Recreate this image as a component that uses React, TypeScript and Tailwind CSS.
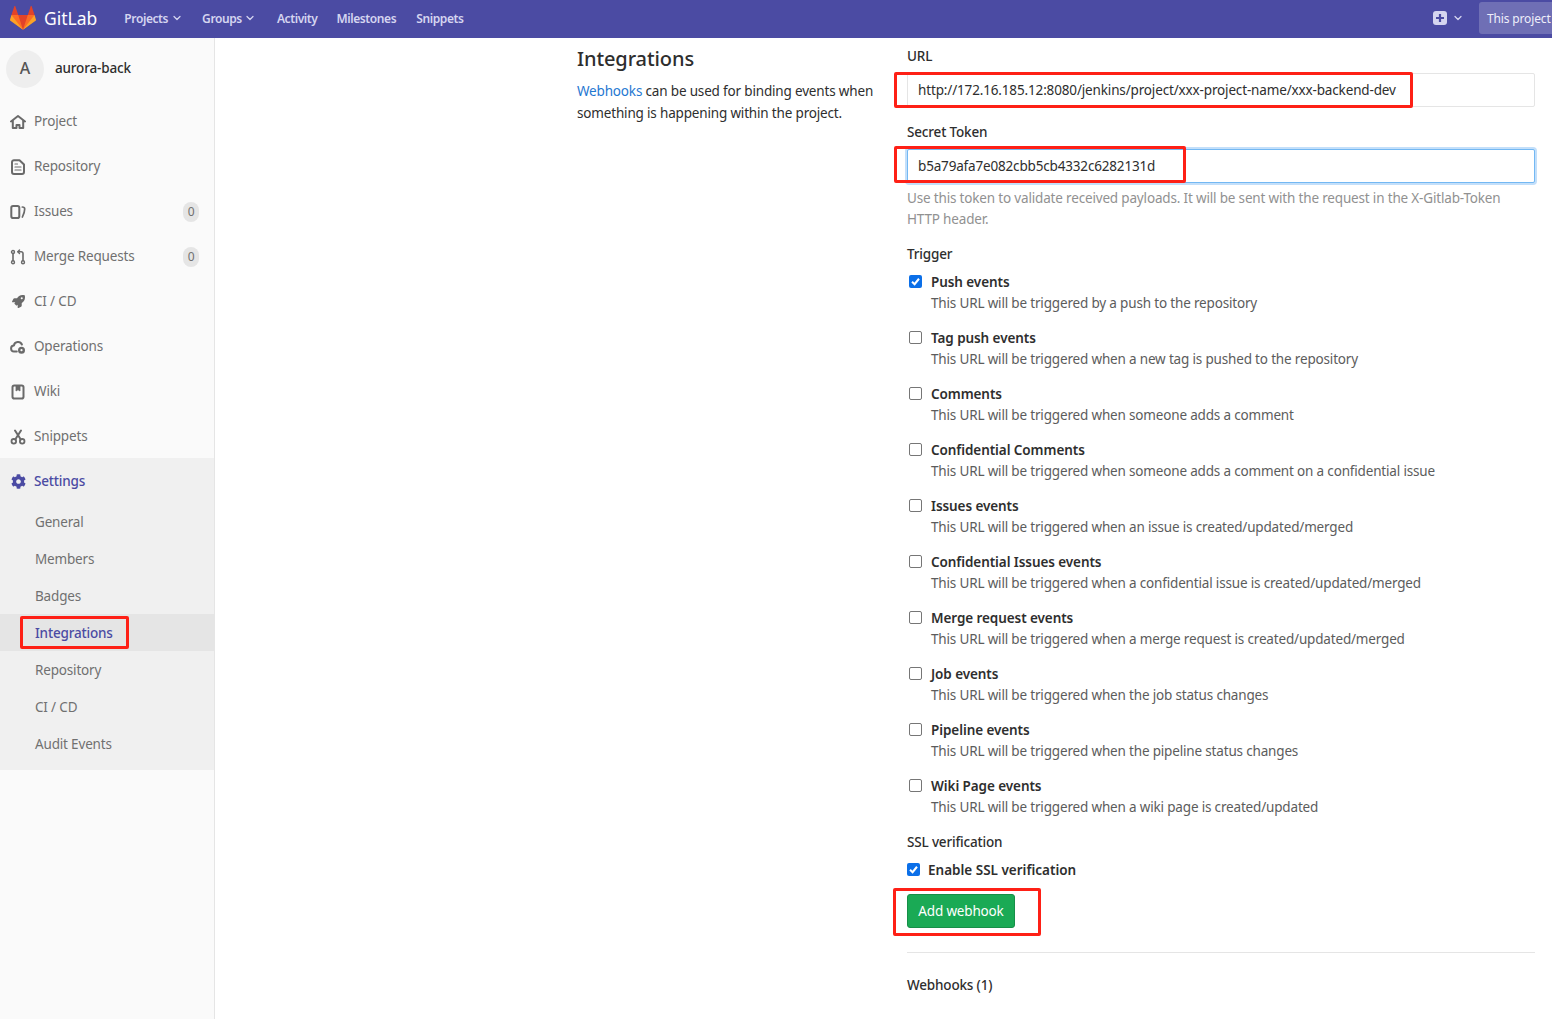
import React from "react";
import { ChevronDown } from "lucide-react";
import { FaCog, FaRocket } from "react-icons/fa";

const Ico = ({ children }: { children: React.ReactNode }) => (
  <svg viewBox="0 0 16 16" width="16" height="16" fill="none" stroke="#6a6a6a" strokeWidth="2" strokeLinecap="round" strokeLinejoin="round" className="shrink-0">{children}</svg>
);

const Logo = () => (
  <svg viewBox="0 0 36 36" width="26" height="26" className="shrink-0">
    <path fill="#e24329" d="M2 14l9.38 9v-9l-4-12.28c-.205-.632-1.176-.632-1.38 0z" />
    <path fill="#e24329" d="M34 14l-9.38 9v-9l4-12.28c.205-.632 1.176-.632 1.38 0z" />
    <path fill="#e24329" d="M18 34.38 3 14h30z" />
    <path fill="#fc6d26" d="M18 34.38 11.38 14H2l4 11z" />
    <path fill="#fc6d26" d="M18 34.38 24.62 14H34l-4 11z" />
    <path fill="#fca326" d="M2 14L.1 20.16c-.18.565 0 1.2.5 1.56l17.42 12.66z" />
    <path fill="#fca326" d="M34 14l1.9 6.16c.18.565 0 1.2-.5 1.56L18 34.38z" />
  </svg>
);

const navIcons: Record<string, React.ReactNode> = {
  Project: <Ico><path d="M1 7.500 8 2l7 5.500" /><path d="M2.800 7v7h3.700v-3h3v3h3.700V7" /></Ico>,
  Repository: <Ico><path d="M4 1.200h5.500L14 5.500V13a2 2 0 0 1-2 2H4a2 2 0 0 1-2-2V3.200a2 2 0 0 1 2-2Z" /><path d="M5 8h6M5 11h6M5 5h2.500" strokeWidth="1.200" /></Ico>,
  Issues: <Ico><rect x="1.300" y="2" width="8" height="12" rx="1.800" /><path d="M12.300 3c1.600 0 2.400.7 2.400 2 0 2-.6 4.500-2.300 8" strokeWidth="1.700" /></Ico>,
  "Merge Requests": <Ico><circle cx="3" cy="3" r="1.500" strokeWidth="1.400" /><circle cx="3" cy="13.200" r="1.500" strokeWidth="1.400" /><circle cx="13" cy="13.200" r="1.500" strokeWidth="1.400" /><path d="M3 4.500v7M13 11.500V4.500a1.800 1.800 0 0 0-1.800-1.800H8" strokeWidth="1.600" /><path d="M9.500 1 7.800 2.700l1.700 1.700" strokeWidth="1.400" /></Ico>,
  "CI / CD": <FaRocket size={13} color="#6a6a6a" className="mx-[1.500px] shrink-0" />,
  Operations: <Ico><path d="M6.800 12.500H4.300a3 3 0 0 1-.4-6 4.200 4.200 0 0 1 8-1" /><circle cx="11.500" cy="11.200" r="2.300" strokeWidth="2.400" /></Ico>,
  Wiki: <Ico><rect x="2.500" y="1.500" width="11" height="13" rx="1.800" /><path d="M6 2v5l2-1.300L10 7V2" fill="#6a6a6a" strokeWidth="0.800" /></Ico>,
  Snippets: <Ico><circle cx="3.800" cy="12.300" r="2.300" strokeWidth="1.800" /><circle cx="12.200" cy="12.300" r="2.300" strokeWidth="1.800" /><path d="M5.200 10.500 11 1.500M10.800 10.500 5 1.500" /></Ico>,
};

const nav: { label: string; badge?: string }[] = [
  { label: "Project" },
  { label: "Repository" },
  { label: "Issues", badge: "0" },
  { label: "Merge Requests", badge: "0" },
  { label: "CI / CD" },
  { label: "Operations" },
  { label: "Wiki" },
  { label: "Snippets" },
];

const subNav = ["General", "Members", "Badges", "Integrations", "Repository", "CI / CD", "Audit Events"];

const triggers: [string, string, boolean][] = [
  ["Push events", "This URL will be triggered by a push to the repository", true],
  ["Tag push events", "This URL will be triggered when a new tag is pushed to the repository", false],
  ["Comments", "This URL will be triggered when someone adds a comment", false],
  ["Confidential Comments", "This URL will be triggered when someone adds a comment on a confidential issue", false],
  ["Issues events", "This URL will be triggered when an issue is created/updated/merged", false],
  ["Confidential Issues events", "This URL will be triggered when a confidential issue is created/updated/merged", false],
  ["Merge request events", "This URL will be triggered when a merge request is created/updated/merged", false],
  ["Job events", "This URL will be triggered when the job status changes", false],
  ["Pipeline events", "This URL will be triggered when the pipeline status changes", false],
  ["Wiki Page events", "This URL will be triggered when a wiki page is created/updated", false],
];

const Check = ({ on }: { on: boolean }) =>
  on ? (
    <span className="flex h-[13px] w-[13px] shrink-0 items-center justify-center rounded-[2px] bg-[#0b6fe8]">
      <svg viewBox="0 0 12 12" width="11" height="11" fill="none" stroke="#fff" strokeWidth="2.200"><path d="M2.200 6.300 5 9l4.800-6" /></svg>
    </span>
  ) : (
    <span className="block h-[13px] w-[13px] shrink-0 rounded-[2px] border border-[#767676] bg-white" />
  );

const RedBox = ({ className }: { className: string }) => (
  <div className={`absolute rounded-[2px] border-[3px] border-[#fe2016] ${className}`} />
);

export default function App() {
  return (
    <div className="relative flex h-[1019px] w-[1552px] flex-col overflow-hidden bg-white text-[13.5px] leading-[21px] tracking-[-0.17px] text-[#2e2e2e] [font-family:'Noto_Sans',sans-serif]">
      <header className="flex h-[38px] shrink-0 items-center bg-[#4b4ba3] pb-[2px] pl-[10px] text-[12px] font-semibold tracking-[-0.4px] text-[#d5d5f0]">
        <Logo />
        <span className="ml-[8px] mr-[27px] text-[17.5px] font-normal tracking-normal text-white">GitLab</span>
        <span className="flex items-center gap-[3px]">Projects <ChevronDown size={12} strokeWidth={2.500} /></span>
        <span className="ml-[19px] flex items-center gap-[2px]">Groups <ChevronDown size={12} strokeWidth={2.500} /></span>
        <span className="ml-[21px]">Activity</span>
        <span className="ml-[19px]">Milestones</span>
        <span className="ml-[20px]">Snippets</span>
        <div className="ml-auto flex items-center">
          <span className="flex h-[14px] w-[14px] items-center justify-center rounded-[3px] bg-[#d5d5f0]">
            <svg viewBox="0 0 14 14" width="14" height="14" stroke="#4b4ba3" strokeWidth="2.200"><path d="M7 3v8M3 7h8" /></svg>
          </span>
          <ChevronDown size={12} strokeWidth={2.500} className="ml-[5px]" />
          <div className="ml-[15px] flex h-[32px] w-[73px] items-center rounded-l-[3px] bg-[#6f6fb5] pl-[8px] text-[12px] font-normal tracking-[-0.15px] whitespace-nowrap text-[#eeeefa]">This project</div>
        </div>
      </header>

      <div className="flex min-h-0 flex-1">
        <aside className="w-[215px] shrink-0 border-r border-[#e5e5e5] bg-[#fafafa]">
          <div className="flex h-[60px] items-center pl-[6px] pt-[1px]">
            <div className="flex h-[38px] w-[38px] items-center justify-center rounded-full bg-[#eeeeee] text-[16px] font-medium text-[#555]">A</div>
            <span className="ml-[11px] font-medium text-[#2e2e2e]">aurora-back</span>
          </div>
          <div className="flex flex-col">
            {nav.map((n) => (
              <div key={n.label} className="flex h-[45px] items-center pl-[10px] pr-[15px] pt-[2px] text-[#707070]">
                <span className="flex w-[24px] shrink-0 items-center">{navIcons[n.label]}</span>
                <span>{n.label}</span>
                {n.badge && <span className="ml-auto flex h-[20px] w-[16px] items-center justify-center rounded-full bg-[#e5e5e5] text-[12px]">{n.badge}</span>}
              </div>
            ))}
          </div>
          <div className="bg-[#f0f0f0] pb-[8px]">
            <div className="flex h-[45px] items-center pl-[11px] pt-[2px] font-medium text-[#4b4ba3]">
              <span className="flex w-[23px] shrink-0 items-center"><FaCog size={15} /></span>
              Settings
            </div>
            <div className="flex flex-col">
              {subNav.map((s, i) => (
                <div key={i} className={`flex h-[37px] items-center pl-[35px] pt-[2px] ${s === "Integrations" ? "bg-[#e5e5e5] font-medium text-[#4b4ba3]" : "text-[#707070]"}`}>{s}</div>
              ))}
            </div>
          </div>
        </aside>

        <main className="flex min-w-0 flex-1 gap-[32px] pl-[362px] pr-[17px]">
          <section className="w-[298px] shrink-0 pt-[5px]">
            <h4 className="text-[20px] leading-[32px] font-medium tracking-[-0.1px]">Integrations</h4>
            <p className="mt-[5px] leading-[22px]"><span className="text-[#1f78d1]">Webhooks</span> can be used for binding events when something is happening within the project.</p>
          </section>
          <section className="min-w-0 flex-1 pt-[8px]">
            <div className="font-medium">URL</div>
            <div className="mt-[6px] flex h-[34px] items-center rounded-[2px] border border-[#e5e5e5] bg-white px-[10px] tracking-[-0.15px]">http://172.16.185.12:8080/jenkins/project/xxx-project-name/xxx-backend-dev</div>
            <div className="mt-[15px] font-medium">Secret Token</div>
            <div className="mt-[6px] flex h-[34px] items-center rounded-[2px] border border-[#73b8f3] bg-white px-[10px] shadow-[0_0_0_2px_#c3dffa]">b5a79afa7e082cbb5cb4332c6282131d</div>
            <p className="mt-[5px] text-[#919191]">Use this token to validate received payloads. It will be sent with the request in the X-Gitlab-Token HTTP header.</p>
            <div className="mt-[14px] font-medium">Trigger</div>
            <div className="mt-[7px] flex flex-col">
              {triggers.map(([t, d, on]) => (
                <div key={t} className="flex h-[56px] items-start pl-[2px]">
                  <span className="mt-[3px] block"><Check on={on} /></span>
                  <div className="ml-[9px]">
                    <div className="font-semibold tracking-[-0.08px]">{t}</div>
                    <div className="text-[#5c5c5c]">{d}</div>
                  </div>
                </div>
              ))}
            </div>
            <div className="font-medium">SSL verification</div>
            <div className="mt-[7px] flex items-center">
              <span className="mb-[2px] block"><Check on /></span>
              <span className="ml-[8px] font-semibold tracking-normal">Enable SSL verification</span>
            </div>
            <div className="mt-[13px] flex h-[34px] w-[108px] items-center justify-center rounded-[3px] border border-[#168f48] bg-[#1aaa55] text-white">Add webhook</div>
            <div className="mt-[24px] h-px bg-[#e5e5e5]" />
            <div className="mt-[22px] font-medium">Webhooks (1)</div>
          </section>
        </main>
      </div>

      <RedBox className="left-[894px] top-[72px] h-[36px] w-[519px]" />
      <RedBox className="left-[894px] top-[146px] h-[37px] w-[292px]" />
      <RedBox className="left-[20px] top-[616px] h-[33px] w-[109px]" />
      <RedBox className="left-[893px] top-[888px] h-[48px] w-[148px]" />
    </div>
  );
}
